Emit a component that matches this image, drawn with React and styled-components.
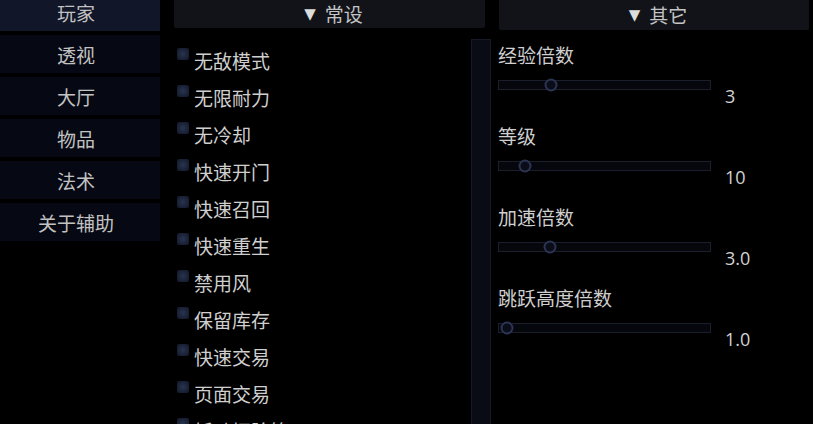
import React from "react";
import styled, { createGlobalStyle, css } from "styled-components";

const GlobalStyle = createGlobalStyle`
  html, body {
    margin: 0;
    padding: 0;
    background: #000;
    overflow: hidden;
  }
  body {
    font-family: "Noto Sans CJK SC", "Noto Sans", sans-serif;
    color: #cdcdcd;
  }
`;

const Screen = styled.div`
  width: 813px;
  height: 424px;
  display: flex;
  background: #000;
  overflow: hidden;
`;

const Nav = styled.div`
  width: 160px;
  display: flex;
  flex-direction: column;
  gap: 4px;
  margin-top: -7px;
  margin-right: 14px;
`;

const NavItem = styled.div`
  height: 38px;
  padding-right: 8px;
  display: flex;
  align-items: center;
  justify-content: center;
  font-size: 19px;
  color: #c2c2c2;
  background: #060913;
  ${(p) =>
    p.$active &&
    css`
      background: #111628;
    `}
`;

const Column = styled.div`
  width: ${(p) => p.$w}px;
  display: flex;
  flex-direction: column;
  gap: 7px;
`;

const Header = styled.div`
  height: 30px;
  margin-right: ${(p) => p.$mr || 0}px;
  margin-left: ${(p) => p.$ml || 0}px;
  display: flex;
  align-items: center;
  justify-content: center;
  background: #111318;
  border-radius: 0 0 2px 2px;
  font-size: 19px;
  line-height: 28px;
  color: #c4c4c4;
  gap: 9px;
`;

const Arrow = styled.span`
  font-family: "DejaVu Sans", sans-serif;
  font-size: 15px;
  color: #dcdcdc;
  margin-left: 8px;
`;

const ScrollArea = styled.div`
  flex: 1;
  display: flex;
`;

const List = styled.div`
  flex: 1;
  padding-top: 7px;
  padding-left: 3px;
  display: flex;
  flex-direction: column;
`;

const CheckRow = styled.div`
  height: 37px;
  display: flex;
  align-items: flex-start;
  gap: 5px;
`;

const Box = styled.div`
  width: 12px;
  height: 12px;
  margin-top: 6px;
  flex: none;
  border-radius: 2px;
  background: radial-gradient(circle at 50% 50%, #28354f 0%, #1a2237 60%, #111626 100%);
`;

const CheckText = styled.span`
  font-size: 19px;
  line-height: 37px;
  color: #cfcfcf;
`;

const Scrollbar = styled.div`
  width: 18px;
  margin-top: 4px;
  background: #0a0c15;
  border: 1px solid #161926;
  border-bottom: none;
  display: flex;
  flex-direction: column;
  justify-content: flex-end;
`;

const Thumb = styled.div`
  height: 16px;
  background: #0e111c;
  border-top: 1px solid #1a1e2c;
`;

const Settings = styled.div`
  padding-top: 5px;
  display: flex;
  flex-direction: column;
`;

const Group = styled.div`
  height: 81px;
  display: flex;
  flex-direction: column;
`;

const Label = styled.div`
  font-size: 19px;
  line-height: 26px;
  color: #cfcfcf;
`;

const SliderRow = styled.div`
  margin-top: 12px;
  display: flex;
  align-items: flex-start;
  gap: 14px;
`;

const Track = styled.div`
  position: relative;
  width: 211px;
  height: 8px;
  background: #06070d;
  border: 1px solid #1b1e2b;
`;

const Knob = styled.div`
  position: absolute;
  top: 50%;
  width: 9px;
  height: 9px;
  border-radius: 50%;
  border: 2px solid #2c3453;
  background: #0a0c17;
  transform: translate(-50%, -50%);
`;

const Value = styled.div`
  margin-top: 5px;
  font-family: "Open Sans", "Noto Sans", sans-serif;
  font-size: 18px;
  line-height: 22px;
  color: #d2d2d2;
`;

const navItems = ["玩家", "透视", "大厅", "物品", "法术", "关于辅助"];

const checks = [
  "无敌模式",
  "无限耐力",
  "无冷却",
  "快速开门",
  "快速召回",
  "快速重生",
  "禁用风",
  "保留库存",
  "快速交易",
  "页面交易",
  "拆动探险箱",
];

const sliders = [
  { label: "经验倍数", value: "3", pos: 52 },
  { label: "等级", value: "10", pos: 26 },
  { label: "加速倍数", value: "3.0", pos: 51 },
  { label: "跳跃高度倍数", value: "1.0", pos: 8 },
];

export default function App() {
  return (
    <>
      <GlobalStyle />
      <Screen>
        <Nav>
          {navItems.map((n, i) => (
            <NavItem key={n} $active={i === 0}>
              {n}
            </NavItem>
          ))}
        </Nav>
        <Column $w={317}>
          <Header $mr={6}>
            <Arrow>▼</Arrow>常设
          </Header>
          <ScrollArea>
            <List>
              {checks.map((c) => (
                <CheckRow key={c}>
                  <Box />
                  <CheckText>{c}</CheckText>
                </CheckRow>
              ))}
            </List>
            <Scrollbar>
              <Thumb />
            </Scrollbar>
          </ScrollArea>
        </Column>
        <Column $w={311} style={{ marginLeft: 7 }}>
          <Header $ml={1}>
            <Arrow>▼</Arrow>其它
          </Header>
          <Settings>
            {sliders.map((s) => (
              <Group key={s.label}>
                <Label>{s.label}</Label>
                <SliderRow>
                  <Track>
                    <Knob style={{ left: s.pos }} />
                  </Track>
                  <Value>{s.value}</Value>
                </SliderRow>
              </Group>
            ))}
          </Settings>
        </Column>
      </Screen>
    </>
  );
}
